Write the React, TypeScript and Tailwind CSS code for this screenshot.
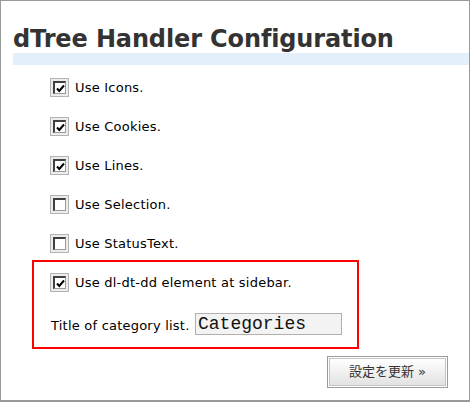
import React from 'react';

const labelFont = { fontFamily: '"DejaVu Sans", Verdana, sans-serif' };

const Checkbox: React.FC<{ checked: boolean }> = ({ checked }) => (
  <div className="w-[19px] h-[19px] border border-[#b4b4b4] bg-[#ececec] p-[2px] shrink-0">
    <div className="w-[13px] h-[13px] border-t-2 border-l-2 border-r border-b border-t-[#404040] border-l-[#404040] border-r-[#9a9a9a] border-b-[#9a9a9a] bg-white flex items-center justify-center">
      {checked && (
        <svg width="9" height="9" viewBox="0 0 9 9">
          <path d="M1 4.5 L3.3 7 L8 1.5" fill="none" stroke="#000" strokeWidth="2" />
        </svg>
      )}
    </div>
  </div>
);

const Option: React.FC<{ label: string; checked: boolean }> = ({ label, checked }) => (
  <div className="flex items-center h-[19px] gap-[6px]">
    <Checkbox checked={checked} />
    <span className="text-[13px] leading-[19px] tracking-[0.22px] text-black" style={labelFont}>{label}</span>
  </div>
);

const options = [
  { label: 'Use Icons.', checked: true },
  { label: 'Use Cookies.', checked: true },
  { label: 'Use Lines.', checked: true },
  { label: 'Use Selection.', checked: false },
  { label: 'Use StatusText.', checked: false },
];

export default function App() {
  return (
    <div className="w-[470px] h-[402px] border border-b-2 border-[#9a9a9a] bg-white flex flex-col overflow-hidden">
      <h1
        className="ml-[12px] mt-[24px] text-[24px] leading-[28px] tracking-[-0.13px] font-bold text-[#333] whitespace-nowrap"
        style={{ fontFamily: '"DejaVu Sans", Verdana, sans-serif' }}
      >
        dTree Handler Configuration
      </h1>
      <div className="ml-[12px] h-[12px] bg-[#e3f0fb]" />

      <div className="mt-[13px] pl-[49px] flex flex-col gap-[20px]">
        {options.map((o) => (
          <Option key={o.label} label={o.label} checked={o.checked} />
        ))}
      </div>

      <div className="ml-[31px] mt-[7px] w-[327px] border-2 border-[#ff0000] pt-[11px] pb-[12px] pl-[16px]">
        <Option label="Use dl-dt-dd element at sidebar." checked={true} />
        <div className="mt-[21px] flex items-end">
          <span className="ml-[1px] w-[144px] text-[13px] leading-[19px] tracking-[0.22px] text-black whitespace-nowrap" style={labelFont}>
            Title of category list.
          </span>
          <div
            className="w-[147px] h-[22px] border border-[#b0b0b0] bg-[#f3f3f3] pl-[2px] text-[18px] leading-[20px] text-[#111]"
            style={{ fontFamily: '"Liberation Mono", "Courier New", monospace' }}
          >
            Categories
          </div>
        </div>
      </div>

      <div className="mt-[7px] mr-[21px] flex justify-end">
        <div className="w-[121px] h-[32px] border border-[#9c9c9c] bg-white p-[1px]">
          <div
            className="w-full h-full border border-[#c4c4c4] bg-gradient-to-b from-white to-[#e2e2e2] flex items-center justify-center text-[13px] text-[#333]"
            style={{ fontFamily: '"DejaVu Sans", "Noto Sans CJK JP", sans-serif' }}
          >
            設定を更新 »
          </div>
        </div>
      </div>
    </div>
  );
}
